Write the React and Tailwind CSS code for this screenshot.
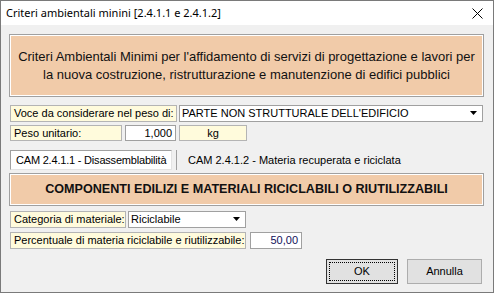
import React from "react";

const F = { fontFamily: '"Liberation Sans", Arial, sans-serif' };

function Arrow() {
  return (
    <svg width="8" height="5" viewBox="0 0 8 5" className="shrink-0">
      <path d="M0 0 L7 0 L3.5 4 Z" fill="#000" />
    </svg>
  );
}

export default function App() {
  return (
    <div
      className="w-[494px] h-[293px] border border-[#7a7a7a] bg-[#f0f0f0] flex flex-col text-black overflow-hidden whitespace-nowrap"
      style={F}
    >
      {/* title bar */}
      <div className="h-[24px] bg-white flex items-center justify-between shrink-0">
        <span className="pl-[5px] text-[11px] text-black" style={{ fontFamily: '"Noto Sans", "Liberation Sans", sans-serif' }}>
          Criteri ambientali minini [2.4.1.1 e 2.4.1.2]
        </span>
        <svg width="11" height="11" viewBox="0 0 11 11" className="mr-[10px]">
          <path d="M0.5 0.5 L10.5 10.5 M10.5 0.5 L0.5 10.5" stroke="#000" strokeWidth="1" />
        </svg>
      </div>

      <div className="flex flex-col pl-[8px] pr-[9px]">
        {/* orange header */}
        <div className="mt-[9px] h-[63px] border border-[#a0a0a0] bg-white p-px">
          <div className="h-full bg-[#f1cba9] flex items-center justify-center text-center text-[13px] leading-[18px] text-[#111]">
            Criteri Ambientali Minimi per l'affidamento di servizi di progettazione e lavori per
            <br />
            la nuova costruzione, ristrutturazione e manutenzione di edifici pubblici
          </div>
        </div>

        <div className="flex flex-col px-px text-[11px]">
          {/* row 1 */}
          <div className="mt-[8px] flex h-[17px] gap-[2px]">
            <div className="w-[167px] border border-[#b4b4b4] bg-[#fffbdc] flex items-center pl-[3px]">
              Voce da considerare nel peso di:
            </div>
            <div className="flex-1 border border-[#a0a0a0] bg-white flex items-center pl-[2px] pr-[4px] justify-between">
              <span>PARTE NON STRUTTURALE DELL'EDIFICIO</span>
              <Arrow />
            </div>
          </div>

          {/* row 2 */}
          <div className="mt-[3px] flex h-[16px]">
            <div className="w-[112px] border border-[#b4b4b4] bg-[#fffbdc] flex items-center pl-[3px]">
              Peso unitario:
            </div>
            <div className="ml-[3px] w-[51px] border border-[#a0a0a0] bg-white flex items-center justify-end pr-[3px]">
              1,000
            </div>
            <div className="ml-[3px] w-[68px] border border-[#b4b4b4] bg-[#fffbdc] flex items-center justify-center">
              kg
            </div>
          </div>

          {/* tabs */}
          <div className="mt-[9px] flex h-[20px] items-stretch">
            <div className="w-[162px] overflow-hidden border border-[#a0a0a0] border-r-[#e3e3e3] border-b-[#e3e3e3] bg-white flex items-center pl-[5px] tracking-[-0.2px]">
              CAM 2.4.1.1 - Disassemblabilità
            </div>
            <div className="ml-[4px] w-px bg-[#a0a0a0]" />
            <div className="flex items-center pl-[11px]">
              CAM 2.4.1.2 - Materia recuperata e riciclata
            </div>
          </div>
        </div>

        {/* orange 2 */}
        <div className="mt-[3px] h-[33px] border border-[#a0a0a0] bg-white p-px">
          <div className="h-full bg-[#f1cba9] flex items-center justify-center font-bold text-[12.6px] text-[#111]">
            COMPONENTI EDILIZI E MATERIALI RICICLABILI O RIUTILIZZABILI
          </div>
        </div>

        <div className="flex flex-col px-px text-[11px]">
          {/* category */}
          <div className="mt-[5px] flex h-[17px]">
            <div className="w-[116px] border border-[#b4b4b4] bg-[#fffbdc] flex items-center pl-[3px]">
              Categoria di materiale:
            </div>
            <div className="ml-[2px] w-[118px] border border-[#a0a0a0] bg-white flex items-center pl-[2px] pr-[4px] justify-between">
              <span>Riciclabile</span>
              <Arrow />
            </div>
          </div>

          {/* percent */}
          <div className="mt-[4px] flex h-[17px]">
            <div className="w-[236px] border border-[#b4b4b4] bg-[#fffbdc] flex items-center pl-[3px]">
              Percentuale di materia riciclabile e riutilizzabile:
            </div>
            <div className="ml-[4px] w-[52px] border border-[#a0a0a0] bg-white flex items-center justify-end pr-[3px] text-[#10105a]">
              50,00
            </div>
          </div>

          {/* buttons */}
          <div className="mt-[10px] flex justify-end gap-[9px] pr-px">
            <div className="w-[72px] h-[25px] border border-[#333] bg-[#e1e1e1] p-[2px]">
              <div className="h-full border border-dotted border-black flex items-center justify-center text-[11px]">
                OK
              </div>
            </div>
            <div className="w-[75px] h-[25px] border border-[#adadad] bg-[#e1e1e1] flex items-center justify-center text-[11px]">
              Annulla
            </div>
          </div>
        </div>
      </div>
    </div>
  );
}
